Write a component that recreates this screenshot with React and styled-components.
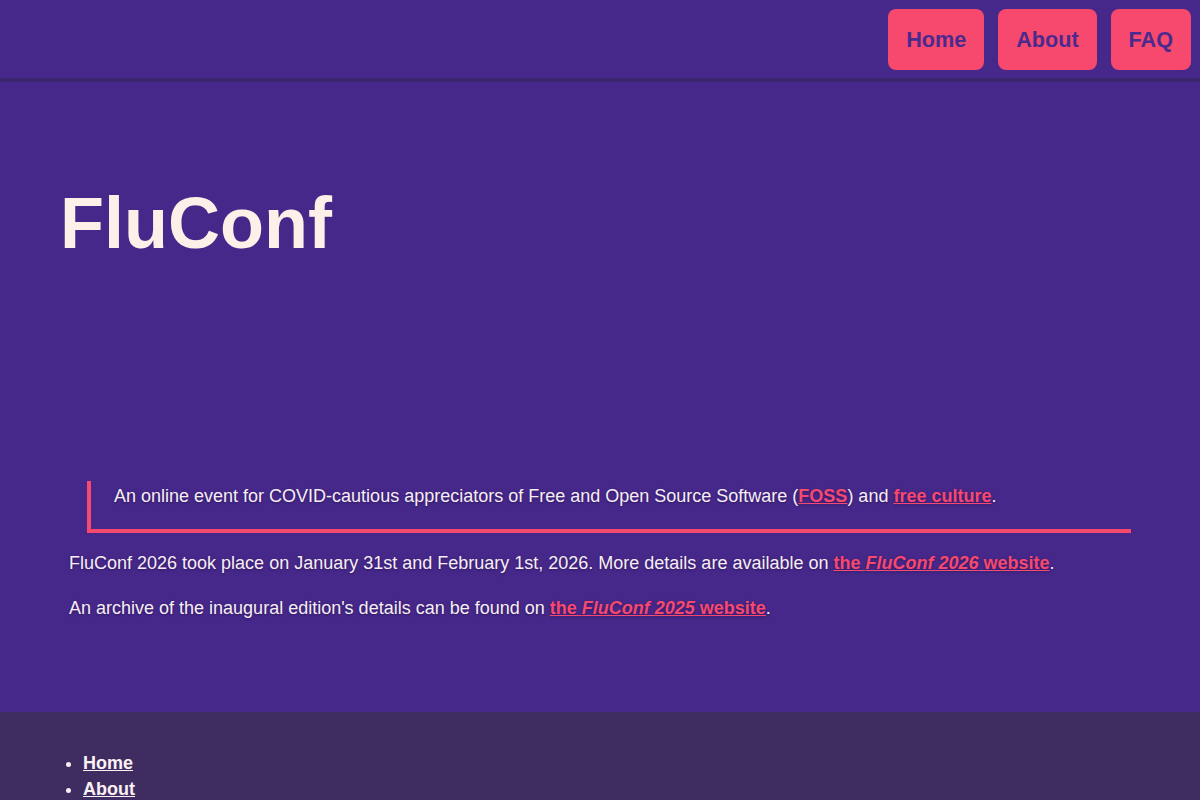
import React from "react";
import styled, { createGlobalStyle } from "styled-components";

const GlobalStyle = createGlobalStyle`
  html, body {
    margin: 0;
    padding: 0;
    background: #46288a;
  }
  body {
    font-family: "Liberation Sans", Arial, sans-serif;
    color: #f6eef2;
  }
`;

const Header = styled.header`
  display: flex;
  justify-content: flex-end;
  gap: 14px;
  padding: 9px 9px 8px;
  background: #46288a;
  border-bottom: 4px solid #3b256f;
`;

const NavButton = styled.a`
  display: block;
  padding: 18px;
  background: #f7486d;
  color: #4a2a8e;
  border-radius: 8px;
  font-size: 21.6px;
  font-weight: 700;
  line-height: 25px;
  text-decoration: none;
`;

const Hero = styled.section`
  padding: 98px 60px 215px;
`;

const Title = styled.h1`
  margin: 0;
  font-size: 72px;
  line-height: 86px;
  font-weight: 700;
  color: #fdf0e8;
`;

const Main = styled.main`
  padding: 0 69px 90px;
  font-size: 18px;
  line-height: 27px;
  text-shadow: 0 1px 3px rgba(20, 5, 50, 0.45);
`;

const Quote = styled.blockquote`
  margin: 0 0 17px 18px;
  padding: 2px 0 19px 23px;
  border-left: 4px solid #f7486d;
  border-bottom: 4px solid #f7486d;
`;

const Para = styled.p`
  margin: ${(p) => (p.$flush ? "0" : "0 0 18px")};
`;

const Link = styled.a`
  color: #f7486d;
  font-weight: 700;
  text-decoration: underline;
`;

const Footer = styled.footer`
  background: #3f2d62;
  padding: 38px 43px 20px;
`;

const FooterList = styled.ul`
  margin: 0;
  padding-left: 40px;
  font-size: 18px;
  line-height: 26px;
`;

const FooterLink = styled.a`
  color: #fbf1f3;
  font-weight: 700;
  text-decoration: underline;
`;

export default function App() {
  return (
    <>
      <GlobalStyle />
      <Header>
        <NavButton href="#">Home</NavButton>
        <NavButton href="#">About</NavButton>
        <NavButton href="#">FAQ</NavButton>
      </Header>
      <Hero>
        <Title>FluConf</Title>
      </Hero>
      <Main>
        <Quote>
          <Para $flush>
            An online event for COVID-cautious appreciators of Free and Open
            Source Software (<Link href="#">FOSS</Link>) and{" "}
            <Link href="#">free culture</Link>.
          </Para>
        </Quote>
        <Para>
          FluConf 2026 took place on January 31st and February 1st, 2026. More
          details are available on{" "}
          <Link href="#">
            the <em>FluConf 2026</em> website
          </Link>
          .
        </Para>
        <Para $flush>
          An archive of the inaugural edition's details can be found on{" "}
          <Link href="#">
            the <em>FluConf 2025</em> website
          </Link>
          .
        </Para>
      </Main>
      <Footer>
        <FooterList>
          <li>
            <FooterLink href="#">Home</FooterLink>
          </li>
          <li>
            <FooterLink href="#">About</FooterLink>
          </li>
          <li>
            <FooterLink href="#">FAQ</FooterLink>
          </li>
        </FooterList>
      </Footer>
    </>
  );
}
